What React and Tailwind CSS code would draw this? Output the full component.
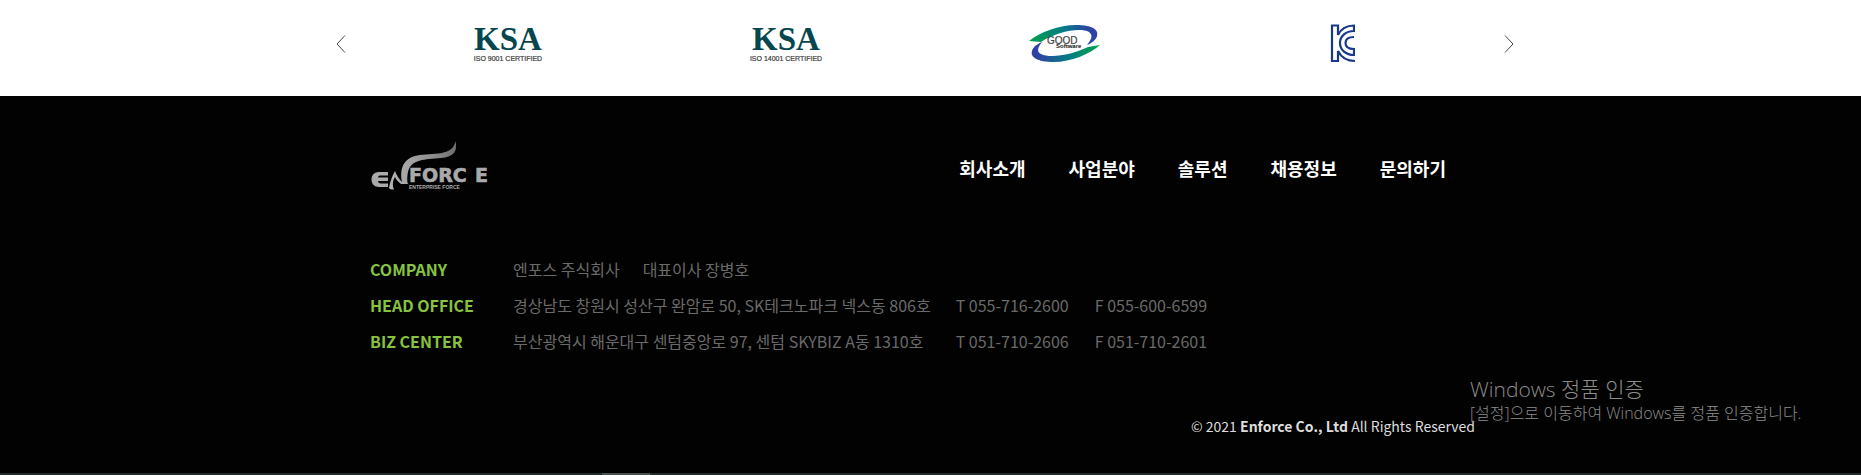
import React from 'react';

const menu = ['회사소개', '사업분야', '솔루션', '채용정보', '문의하기'];

function KsaMark({ code }) {
  return (
    <svg viewBox="0 -4 76 52" className="h-[52px] w-[76px]" role="img" aria-label={`KSA ISO ${code}`}>
      <text x="38" y="28" textAnchor="middle" fontSize="33" fontWeight="700" fill="#05464f" className="font-['Liberation_Serif',serif]">KSA</text>
      <text x="38" y="39" textAnchor="middle" fontSize="7" fill="#3c3c3c" stroke="#3c3c3c" strokeWidth="0.2" className="font-['Liberation_Sans',sans-serif]">{`ISO ${code} CERTIFIED`}</text>
    </svg>
  );
}

function GoodSoftwareMark() {
  return (
    <svg viewBox="-1 1 74 42" className="h-[42px] w-[74px]" role="img" aria-label="GOOD Software">
      <defs>
        <linearGradient id="gsTop" x1="0" x2="1">
          <stop offset="0" stopColor="#00a24a" />
          <stop offset="0.55" stopColor="#08788a" />
          <stop offset="0.85" stopColor="#2d44a4" />
        </linearGradient>
        <linearGradient id="gsBottom" x1="0" x2="1">
          <stop offset="0.1" stopColor="#2d44a4" />
          <stop offset="0.5" stopColor="#08788a" />
          <stop offset="1" stopColor="#00a24a" />
        </linearGradient>
      </defs>
      <path d="M1 19 C12 10 31 3 48 3 C65 3 71 8 69 14 C68 18 64 21 59 23 C64 17 65 13 61 10 C52 5 28 10 13 20 Z" fill="url(#gsTop)" />
      <path d="M72 23 C62 32 43 40 26 40 C9 40 2 35 4 29 C5 25 9 22 14 20 C9 26 9 30 13 32 C23 37 46 32 60 25 Z" fill="url(#gsBottom)" />
      <text x="19" y="22" fontSize="10" fill="#444" stroke="#444" strokeWidth="0.2" className="font-['Liberation_Sans',sans-serif]">GOOD</text>
      <text x="28" y="26" fontSize="6" fontWeight="700" fill="#111" className="font-['Liberation_Sans',sans-serif]">Software</text>
    </svg>
  );
}

function KcMark() {
  return (
    <svg viewBox="-1 1 26 40" className="h-[40px] w-[26px]" role="img" aria-label="KC" fill="none" stroke="#18398a" strokeWidth="2.2">
      <path d="M8 12 V2.500 H2 V38 H8 V28 C11 34 17 38 25 38" />
      <path d="M8 12 C11 6 17 2.500 24 2.500 V8 C16 8 10 13 10 20 C10 27 16 32 24 32 V26 C19 26 15.500 24 15.500 20 C15.500 16 19 14 24 14" />
    </svg>
  );
}

function Chevron({ flip }) {
  return (
    <svg viewBox="0 0 10 18" className="h-[18px] w-[10px]" fill="none" stroke="#444" aria-hidden="true">
      <path d={flip ? 'M1 .5 9 9 1 17.500' : 'M9 .5 1 9 9 17.500'} />
    </svg>
  );
}

function EnforceLogo() {
  return (
    <svg viewBox="0 -1 120 58" className="block h-[58px] w-[120px]" role="img" aria-label="Enforce Enterprise Force">
      <defs>
        <linearGradient id="swoosh" x1="0" x2="1">
          <stop offset="0" stopColor="#b4b4b4" />
          <stop offset="0.6" stopColor="#929292" />
          <stop offset="1" stopColor="#6e6e6e" />
        </linearGradient>
      </defs>
      <path d="M19 48 C20 42 22 36 25 31 C27 36 29 39 32 42 C29 27 35 18 47 15.500 C62 12.500 83 17 85.500 1 C88 12 83 17 71 18 C55 19.500 41 19 38 32 C37 37 37 42 38 44 L31 44 C28 42 26 39 25 37 C23 40 22 45 24 49.500 C21 49.500 20 49 19 48 Z" fill="url(#swoosh)" />
      <path d="M18 32 H9 C4.500 32 1.500 35 1.500 39.500 C1.500 44 4.500 47 9 47 H18 V43.500 H11 C9 43.500 8 42.500 8 41 H18 V37.500 H8 C8 36 9 35.500 11 35.500 H18 Z" fill="#aaa" />
      <g fill="#aaa" fontWeight="700" stroke="#aaa" strokeWidth="0.6" className="font-['DejaVu_Sans',sans-serif]">
        <text x="39" y="42" fontSize="19">FORC</text>
        <text x="105" y="42" fontSize="19">E</text>
      </g>
      <text x="39" y="49" fontSize="5" fill="#aaa" fontWeight="700" className="font-['Liberation_Sans',sans-serif]">ENTERPRISE FORCE</text>
    </svg>
  );
}

export default function App() {
  return (
    <div className="relative overflow-hidden bg-[#020202] font-['Noto_Sans_CJK_KR',sans-serif]">
      <section aria-label="인증" className="bg-white pr-[11px]">
        <div className="mx-auto flex h-24 max-w-[1178px] items-center justify-between pb-2">
          <button type="button" aria-label="이전"><Chevron /></button>
          <ul className="grid max-w-[1112px] flex-1 grid-cols-4 items-center justify-items-center">
            <li><KsaMark code="9001" /></li>
            <li><KsaMark code="14001" /></li>
            <li><GoodSoftwareMark /></li>
            <li><KcMark /></li>
          </ul>
          <button type="button" aria-label="다음"><Chevron flip /></button>
        </div>
      </section>

      <footer className="pt-[43px] pr-[11px]">
        <div className="mx-auto max-w-[1110px]">
          <div className="flex items-center justify-between pr-[34px]">
            <a href="#home"><EnforceLogo /></a>
            <nav>
              <ul className="flex gap-[43px] text-lg leading-7 font-bold text-white">
                {menu.map((item) => (
                  <li key={item}><a href={`#${item}`}>{item}</a></li>
                ))}
              </ul>
            </nav>
          </div>

          <table className="mt-[54px] text-left text-base leading-9 text-[#6a6a6a]">
            <tbody>
              <tr>
                <th scope="row" className="w-[143px] p-0 font-bold text-[#86c440]">COMPANY</th>
                <td colSpan={3} className="p-0">
                  <span className="mr-[23px]">엔포스 주식회사</span>
                  <span>대표이사 장병호</span>
                </td>
              </tr>
              <tr>
                <th scope="row" className="p-0 font-bold text-[#86c440]">HEAD OFFICE</th>
                <td className="p-0 pr-[25px]">경상남도 창원시 성산구 완암로 50, SK테크노파크 넥스동 806호</td>
                <td className="p-0 pr-[26px]">T 055-716-2600</td>
                <td className="p-0">F 055-600-6599</td>
              </tr>
              <tr>
                <th scope="row" className="p-0 font-bold text-[#86c440]">BIZ CENTER</th>
                <td className="p-0 pr-[25px]">부산광역시 해운대구 센텀중앙로 97, 센텀 SKYBIZ A동 1310호</td>
                <td className="p-0 pr-[26px]">T 051-710-2606</td>
                <td className="p-0">F 051-710-2601</td>
              </tr>
            </tbody>
          </table>

          <p className="mt-[57px] pr-[5px] text-right text-sm leading-5 text-[#ddd]">
            © 2021 <strong className="font-bold">Enforce Co., Ltd</strong> All Rights Reserved
          </p>
        </div>
      </footer>

      <div className="mt-[37px] h-[2px] bg-[#1e2d29]">
        <div className="ml-[602px] h-full w-12 bg-[#46524e]" />
      </div>

      <aside className="absolute right-[55px] bottom-[50px] w-[336px] font-['Open_Sans','Noto_Sans_CJK_KR',sans-serif] font-light whitespace-nowrap text-[#8c8c8c]">
        <p className="text-[21px] leading-6">Windows 정품 인증</p>
        <p className="text-base leading-6">[설정]으로 이동하여 Windows를 정품 인증합니다.</p>
      </aside>
    </div>
  );
}
